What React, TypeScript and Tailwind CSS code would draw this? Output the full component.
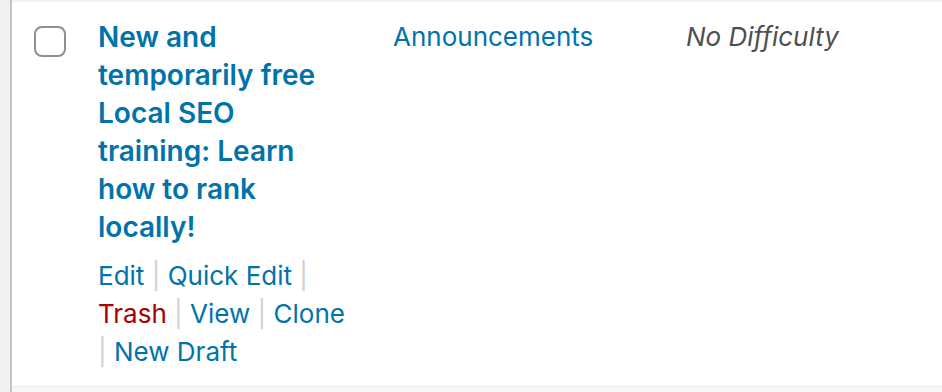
import React from "react";

const Sep = () => <span className="text-[#cfd0d2]">|</span>;

export default function App() {
  return (
    <div
      className="h-[392px] w-[942px] bg-[#f0f0f1] pl-[10px] overflow-hidden"
      style={{ fontFamily: "Inter, 'Noto Sans', sans-serif" }}
    >
      <div className="h-full border-l-2 border-[#c3c4c7] bg-white">
        <div className="flex border-t-2 border-[#f1f1f1] h-[386px]">
          <div className="w-[66px] shrink-0 pl-[22px] pt-[24px]">
            <div className="h-[31px] w-[32px] rounded-[8px] border-2 border-[#8c8f94] bg-white" />
          </div>
          <div className="w-[295px] shrink-0 pl-5 pr-[22px] pt-4">
            <div className="text-[28px] font-semibold leading-[38px] text-[#0073aa]">
              New and temporarily free Local SEO training: Learn how to rank locally!
            </div>
            <div className="mt-[11px] text-[26px] leading-[38px] text-[#0073aa]">
              <span>Edit</span> <Sep /> <span>Quick Edit</span> <Sep />{" "}
              <span className="text-[#aa0000]">Trash</span> <Sep /> <span>View</span> <Sep />{" "}
              <span>Clone</span> <Sep /> <span>New Draft</span>
            </div>
          </div>
          <div className="w-[293px] shrink-0 px-5 pt-4 text-[26px] leading-[38px] text-[#0073aa]">
            Announcements
          </div>
          <div className="flex-1 px-5 pt-4 text-[26px] leading-[38px] italic text-[#4d4f52]">
            No Difficulty
          </div>
        </div>
        <div className="h-[6px] border-t border-[#ececec] bg-[#f6f7f7]" />
      </div>
    </div>
  );
}
